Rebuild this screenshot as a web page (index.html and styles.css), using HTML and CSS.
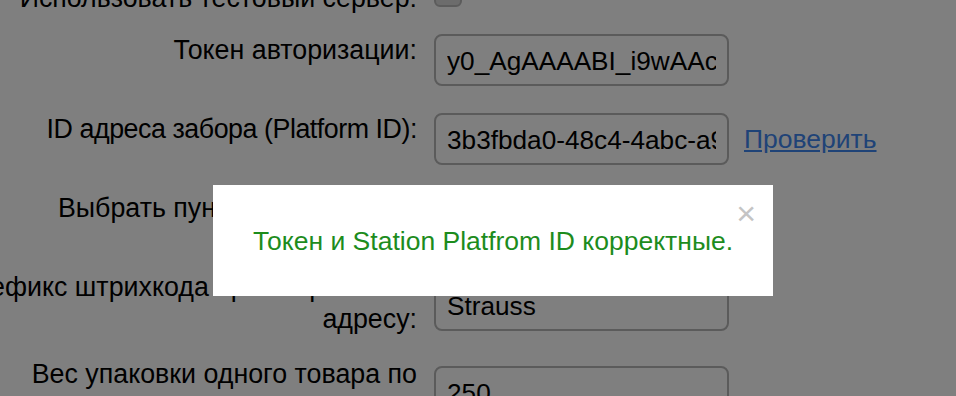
FILE: index.html
```html
<!DOCTYPE html>
<html lang="ru">
<head>
<meta charset="utf-8">
<title>Настройки доставки</title>
<link rel="stylesheet" href="styles.css">
</head>
<body>
<div class="page">
  <form class="settings">
    <div class="row row--check">
      <label class="label">Использовать тестовый сервер:</label>
      <div class="field"><span class="checkbox"></span></div>
    </div>
    <div class="row">
      <label class="label">Токен авторизации:</label>
      <div class="field"><input class="input" type="text" value="y0_AgAAAABI_i9wAAc0jZx8KqL2mN"></div>
    </div>
    <div class="row">
      <label class="label label--narrow">ID адреса забора (Platform ID):</label>
      <div class="field">
        <input class="input" type="text" value="3b3fbda0-48c4-4abc-a9f1-7c2e1d0b5a61">
        <a class="link" href="#">Проверить</a>
      </div>
    </div>
    <div class="row">
      <label class="label">Выбрать пункт самопривоза:</label>
      <div class="field"><span class="input input--select">Выбрать</span></div>
    </div>
    <div class="row row--tall">
      <label class="label">Префикс штрихкода при отправке по адресу:</label>
      <div class="field"><input class="input" type="text" value="Strauss"></div>
    </div>
    <div class="row row--tall">
      <label class="label">Вес упаковки одного товара по умолчанию, г:</label>
      <div class="field"><input class="input" type="text" value="250"></div>
    </div>
  </form>
</div>
<div class="overlay"></div>
<div class="modal">
  <span class="modal__close">×</span>
  <p class="modal__message">Токен и Station Platfrom ID корректные.</p>
</div>
</body>
</html>
```
FILE: styles.css
```css
html, body {
  margin: 0;
  padding: 0;
  background: #ffffff;
  overflow: hidden;
}

body {
  width: 956px;
  height: 396px;
  font-family: "Liberation Sans", Arial, Helvetica, sans-serif;
  color: #000;
  position: relative;
}

.page {
  overflow: hidden;
  height: 396px;
}

.settings {
  margin: -18px 0 0 -53px;
  display: flex;
  flex-direction: column;
}

.row {
  display: flex;
  align-items: flex-start;
  gap: 17px;
  margin-bottom: 27px;
}

.row--check {
  margin-bottom: 20px;
}

.label {
  flex: none;
  width: 470px;
  text-align: right;
  font-size: 26.8px;
  line-height: 32px;
}

.label--narrow {
  letter-spacing: -0.45px;
}

.row--tall .label {
  margin-bottom: -4px;
}

.row--tall .field {
  margin-top: 8px;
}

.field {
  display: flex;
  align-items: center;
  gap: 15px;
}

.checkbox {
  display: block;
  width: 28px;
  height: 26px;
  margin-top: -1px;
  box-sizing: border-box;
  border: 2px solid #b8b8b8;
  border-radius: 6px;
  background: #d8d8d8;
}

.input {
  box-sizing: border-box;
  width: 295px;
  height: 52px;
  padding: 2px 11px 0;
  border: 2px solid #b6b6b6;
  border-radius: 8px;
  background: #fff;
  font-family: "Liberation Sans", Arial, Helvetica, sans-serif;
  font-size: 26.2px;
  color: #000;
  outline: none;
  -webkit-appearance: none;
  appearance: none;
}

.input--select {
  display: flex;
  align-items: center;
}

.link {
  font-size: 26.5px;
  line-height: 32px;
  color: #3f86ee;
  text-decoration: underline;
  white-space: nowrap;
}

.overlay {
  position: absolute;
  inset: 0;
  background: rgba(0, 0, 0, 0.5);
}

.modal {
  position: absolute;
  left: 213px;
  top: 185px;
  width: 560px;
  height: 111px;
  background: #fff;
  display: flex;
  align-items: center;
  justify-content: center;
}

.modal__message {
  margin: 0;
  font-size: 26.5px;
  line-height: 30px;
  color: #1d8c1d;
}

.modal__close {
  position: absolute;
  top: 13px;
  right: 17px;
  font-size: 34px;
  line-height: 30px;
  color: #c4c4c4;
}
```
